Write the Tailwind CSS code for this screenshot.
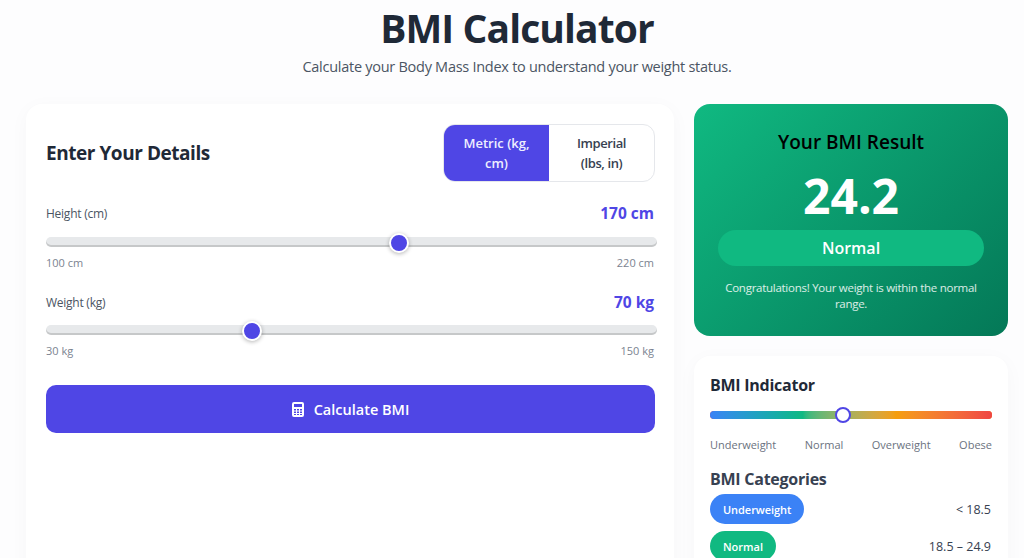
<!DOCTYPE html>
<html lang="en">
  <head>
    <meta charset="UTF-8" />
    <title>BMI Calculator</title>
    <script src="https://cdn.jsdelivr.net/npm/@tailwindcss/browser@4"></script>
  </head>
  <body class="bg-[#fdfdfe] font-['Open_Sans','Noto_Sans',sans-serif] text-[#1f2937]">
    <div class="h-[558px] overflow-hidden pl-[26px] pr-4">
      <!-- header -->
      <header class="text-center h-[104px] pt-[3px]">
        <h1 class="text-[39px] leading-[50px] font-bold tracking-[-0.9px] text-[#1f2937]">BMI Calculator</h1>
        <p class="mt-[2px] text-[14.5px] leading-6 tracking-[-0.27px] text-[#4b5563]">Calculate your Body Mass Index to understand your weight status.</p>
      </header>

      <div class="grid grid-cols-[648px_314px] gap-5 items-start">
        <!-- input card -->
        <main class="bg-white rounded-2xl shadow-[0_4px_20px_rgba(0,0,0,0.03)] pl-5 pr-[19px] pt-5 h-[480px]">
          <div class="flex justify-between items-center h-[58px]">
            <h2 class="text-[19px] font-bold tracking-[-0.45px] text-[#1f2937]">Enter Your Details</h2>
            <div class="flex w-[212px] h-[58px] border border-[#e5e7eb] rounded-xl overflow-hidden text-[13px] leading-5 font-semibold text-center">
              <button type="button" class="w-[105px] bg-[#4f46e5] text-[#eef] font-semibold px-3">Metric (kg, cm)</button>
              <button type="button" class="flex-1 text-[#374151] font-semibold tracking-[-0.4px] px-[22px]">Imperial (lbs, in)</button>
            </div>
          </div>

          <!-- height -->
          <div class="mt-[20px]">
            <div class="flex justify-between items-center h-6 pr-[1px]">
              <label class="text-[12px] font-medium tracking-[-0.25px] text-[#4b5563]">Height (cm)</label>
              <span class="text-[15.5px] font-bold text-[#4f46e5]">170 cm</span>
            </div>
            <div class="relative mt-[11px] h-[10px] w-[611px] rounded-full bg-[#e7e9eb] shadow-[inset_0_-2px_0_rgba(0,0,0,0.14)]">
              <span class="absolute left-[343px] top-[-4px] w-5 h-5 rounded-full bg-[#4f46e5] border-2 border-white shadow-[0_1px_4px_rgba(0,0,0,0.3)]"></span>
            </div>
            <div class="flex justify-between mt-[8px] pr-[1px] text-[11px] leading-4 text-[#7b8390]">
              <span>100 cm</span><span>220 cm</span>
            </div>
          </div>

          <!-- weight -->
          <div class="mt-[20px]">
            <div class="flex justify-between items-center h-6 pr-[1px]">
              <label class="text-[12px] font-medium tracking-[-0.25px] text-[#4b5563]">Weight (kg)</label>
              <span class="text-[15.5px] font-bold text-[#4f46e5]">70 kg</span>
            </div>
            <div class="relative mt-[10px] h-[10px] w-[611px] rounded-full bg-[#e7e9eb] shadow-[inset_0_-2px_0_rgba(0,0,0,0.14)]">
              <span class="absolute left-[196px] top-[-4px] w-5 h-5 rounded-full bg-[#4f46e5] border-2 border-white shadow-[0_1px_4px_rgba(0,0,0,0.3)]"></span>
            </div>
            <div class="flex justify-between mt-[8px] pr-[1px] text-[11px] leading-4 text-[#7b8390]">
              <span>30 kg</span><span>150 kg</span>
            </div>
          </div>

          <button type="button" class="mt-[26px] w-full h-[48px] pt-[1px] rounded-[10px] bg-[#4f46e5] text-white text-[14.5px] font-semibold flex items-center justify-center gap-[10px]">
            <svg width="12" height="15" viewBox="0 0 12 15" fill-rule="evenodd">
              <path fill="#fff" d="M2 0h8a2 2 0 0 1 2 2v11a2 2 0 0 1-2 2H2a2 2 0 0 1-2-2V2a2 2 0 0 1 2-2zM2 2v3h8V2zM2 7v1.5h2V7zM5 7v1.5h2V7zM8 7v1.5h2V7zM2 9.5V11h2V9.5zM5 9.5V11h2V9.5zM8 9.5V11h2V9.5zM2 12v1h2v-1zM5 12v1h2v-1zM8 12v1h2v-1z" />
            </svg>
            Calculate BMI
          </button>
        </main>

        <aside class="flex flex-col gap-5">
          <!-- result -->
          <section class="h-[232px] rounded-2xl bg-linear-[135deg] from-[#10b981] to-[#047857] px-6 pt-6 text-center text-white">
            <h3 class="text-[19px] leading-7 font-semibold text-black">Your BMI Result</h3>
            <div class="mt-[10px] text-[48px] leading-[60px] font-bold">24.2</div>
            <div class="mt-[4px] h-9 rounded-full bg-[#10b981] text-[16px] leading-9 font-semibold">Normal</div>
            <p class="mt-[14px] text-[11.5px] leading-4 tracking-[-0.27px] text-white/85">Congratulations! Your weight is within the normal range.</p>
          </section>

          <!-- indicator -->
          <section class="h-[240px] bg-white rounded-2xl shadow-[0_4px_20px_rgba(0,0,0,0.03)] px-4 pt-[17px]">
            <h3 class="text-[16px] leading-6 font-bold tracking-[-0.25px] text-[#1f2937]">BMI Indicator</h3>
            <div class="relative mt-[14px] h-2 rounded-full bg-[#ef4444]">
              <div class="absolute inset-0 rounded-full bg-linear-to-r from-[#3b82f6] from-0% via-[#10b981] via-33% to-[#f59e0b] to-66%"></div>
              <div class="absolute inset-y-0 left-[66%] right-0 rounded-r-full bg-linear-to-r from-[#f59e0b] to-[#ef4444]"></div>
              <span class="absolute left-[125px] top-[-4px] w-4 h-4 rounded-full bg-white border-2 border-[#4f46e5]"></span>
            </div>
            <div class="flex justify-between mt-[18px] text-[11px] leading-4 text-[#6b7280]">
              <span>Underweight</span><span>Normal</span><span>Overweight</span><span>Obese</span>
            </div>
            <h3 class="mt-[14px] text-[16px] leading-6 font-bold tracking-[-0.25px] text-[#374151]">BMI Categories</h3>
            <ul class="mt-[3px] flex flex-col gap-[7px] text-[12.5px]">
              <li class="flex justify-between items-center h-[30px] pr-[1px]">
                <span class="h-[30px] leading-[31px] px-[13px] rounded-full bg-[#3b82f6] text-white font-semibold text-[11px] tracking-[-0.05px]">Underweight</span>
                <span class="pt-[3px] text-[#374151] font-medium">&lt; 18.5</span>
              </li>
              <li class="flex justify-between items-center h-[30px] pr-[1px]">
                <span class="h-[30px] leading-[31px] px-[13px] rounded-full bg-[#10b981] text-white font-semibold text-[11px]">Normal</span>
                <span class="pt-[3px] text-[#374151] font-medium">18.5 – 24.9</span>
              </li>
            </ul>
          </section>
        </aside>
      </div>
    </div>
  </body>
</html>
